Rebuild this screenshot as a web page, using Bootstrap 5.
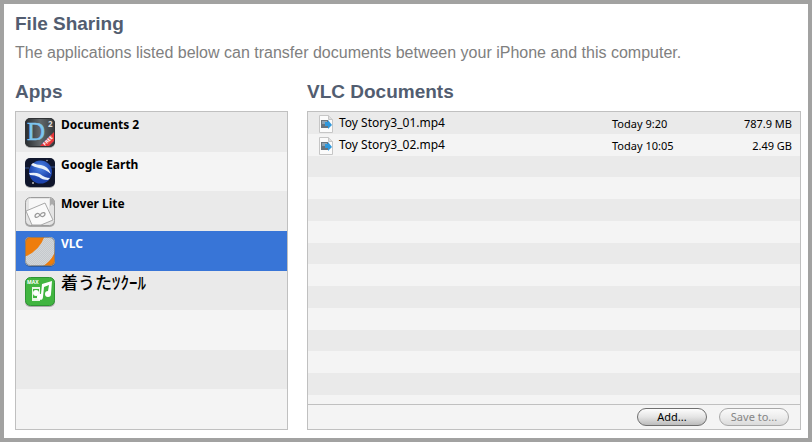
<!DOCTYPE html>
<html lang="en">
<head>
<meta charset="utf-8">
<meta name="viewport" content="width=device-width, initial-scale=1">
<title>File Sharing</title>
<link rel="stylesheet" href="https://cdn.jsdelivr.net/npm/bootstrap@5.3.0/dist/css/bootstrap.min.css">
<style>
body{font-family:"Liberation Sans",Arial,sans-serif;border:4px solid #a2a2a1;background:#fff;padding:8px 7px 8px 11px}
h1,h2{font-size:19px;line-height:24px;font-weight:700;color:#525d70;margin:0}
.intro{font-size:16px;line-height:24px;color:#808080;margin:5px 0 15px}
.sharing{display:grid;grid-template-columns:minmax(0,273fr) minmax(0,494fr);column-gap:19px}
.sharing h2{margin-bottom:7px}
.panel{border:1px solid #c0c0c0;background:#f4f4f4;font-family:"Noto Sans","Noto Sans CJK JP",sans-serif;color:#000}
.app-list{grid-template-rows:repeat(8,minmax(0,1fr))}
.app-row{border:0;background:none;padding:0 8px;font-size:12px;line-height:16px;font-weight:700;text-align:left;color:#000;min-height:0}
.app-row:nth-child(odd),.stripe:nth-child(odd){background:#eaeaea}
.app-row.chosen{background:#3875d7;color:#fff}
.app-row span{margin-top:5px;margin-left:5px}
.app-row .jp{font-family:"Noto Sans CJK JP",sans-serif;font-size:17px;margin-top:3px;font-weight:500}
.app-row svg{width:32px;height:34px;margin-top:4px;flex:none}
.file-table{padding-bottom:9px}
.files{width:100%;height:283px;table-layout:fixed;border-collapse:collapse}
.files td{padding:2px 0 0;height:21px;font-size:11px;line-height:16px;vertical-align:middle}
.files .title{font-size:12px;padding-left:10px}
.files svg{width:16px;height:18px;margin-right:5px;vertical-align:middle}
.files .size{text-align:right;padding-right:8px}
.date-col{width:112px}.size-col{width:76px}
.actions{border-top:1px solid #c0c0c0;padding:3px 11px;gap:12px}
.pill{width:70px;height:18px;border:1px solid #6f6f6f;border-radius:9px;background:linear-gradient(#fdfdfd,#e4e4e4 50%,#bcbcbc);font-size:11px;line-height:16px;padding:0;color:#000}
.pill:disabled{border-color:#a8a8a8;background:linear-gradient(#fafafa,#ededed 50%,#dadada);color:#858585}
</style>
</head>
<body class="min-vh-100">
<main>
<h1>File Sharing</h1>
<p class="intro">The applications listed below can transfer documents between your iPhone and this computer.</p>
<div class="sharing">
<section class="d-flex flex-column">
<h2>Apps</h2>
<div class="panel app-list d-grid flex-grow-1">
<button class="app-row d-flex align-items-start" type="button">
<svg viewBox="0 0 32 34" aria-hidden="true"><defs><linearGradient id="g1"><stop stop-color="#23272a"/><stop offset=".5" stop-color="#62676a"/><stop offset="1" stop-color="#34383b"/></linearGradient><clipPath id="c"><rect x="1" y="2" width="30" height="29" rx="5"/></clipPath></defs><rect x="1" y="3" width="30" height="29" rx="5" fill="#aaa"/><g clip-path="url(#c)"><rect width="32" height="34" fill="url(#g1)"/><path d="M15 31 31 15v9l-7 7z" fill="#e8353b"/></g><text x="3" y="24" font-family="Liberation Serif" font-weight="400" font-size="25" fill="#7dc4ee" stroke="#7dc4ee" stroke-width=".5">D</text><text x="24" y="11" font-size="8" fill="#ddd">2</text><text x="21" y="30" font-size="5" fill="#fff" transform="rotate(-45 21 30)">FREE</text><rect x="1.500" y="2.500" width="29" height="28" rx="5" fill="none" stroke="#303235"/></svg>
<span>Documents 2</span></button>
<button class="app-row d-flex align-items-start" type="button">
<svg viewBox="0 0 32 34" aria-hidden="true"><defs><radialGradient id="g2" cx=".5" cy=".3"><stop stop-color="#4e86e8"/><stop offset="1" stop-color="#1c43ac"/></radialGradient></defs><rect x="1" y="3" width="30" height="29" rx="5" fill="#aaa"/><rect x="1" y="2" width="30" height="29" rx="5" fill="#10162c"/><circle cx="16.500" cy="16" r="11.500" fill="url(#g2)"/><path d="M9 7q4 2 8 2 7 1 10 9-6-5-12-6-5-1-8-3zM5 17q7-1 11 1 5 4 10 4l-2 2q-6 0-9-3-4-2-9-2z" fill="#e9f0fa"/><path d="M1 12h4M26 11h5" stroke="#33508d"/><circle cx="9" cy="27" r="1" fill="#bbb"/><circle cx="23" cy="4.500" r=".7" fill="#ccc"/></svg>
<span>Google Earth</span></button>
<button class="app-row d-flex align-items-start" type="button">
<svg viewBox="0 0 32 34" aria-hidden="true"><rect x="1" y="3" width="30" height="29" rx="5" fill="#aaa"/><rect x="1.500" y="2.500" width="29" height="28" rx="5" fill="#e4e4e4" stroke="#9c9c9c"/><path d="M5 4h20v12H5z" fill="#f7f7f7"/><path d="M26 3v8l2-2 2 2V4z" fill="#aaa"/><path d="M2 16 21 8l8 17-12 5H8z" fill="#fafafa" stroke="#a8a8a8"/><path d="M16 20c-2-3-5-1-5 1s3 2 5-1 5-3 5-1-3 4-5 1z" fill="none" stroke="#9a9a9a" stroke-width="1.300"/></svg>
<span>Mover Lite</span></button>
<button class="app-row chosen d-flex align-items-start" type="button" aria-pressed="true">
<svg viewBox="0 0 32 34" aria-hidden="true"><defs><pattern id="dots" width="2" height="2" patternUnits="userSpaceOnUse"><path d="M0 0h1v1H0zM1 1h1v1H1z" fill="#9aa4ab" opacity=".25"/></pattern></defs><rect x="1" y="3" width="30" height="29" rx="5" fill="#315c9b"/><g clip-path="url(#c)"><path d="M0 0h32v34H0z" fill="#d3d6d8"/><path d="M0 0h32v34H0z" fill="url(#dots)"/><path d="M0 0h21Q16 16 0 22zM32 13v19H17q12-6 15-19z" fill="#ee7d0c"/></g><rect x="1.500" y="2.500" width="29" height="28" rx="5" fill="none" stroke="#777" stroke-opacity=".7"/></svg>
<span>VLC</span></button>
<button class="app-row d-flex align-items-start" type="button">
<svg viewBox="0 0 32 34" aria-hidden="true"><rect x="1" y="3" width="30" height="29" rx="5" fill="#aaa"/><rect x="1.500" y="2.500" width="29" height="28" rx="5" fill="#41b540" stroke="#2e9434"/><text x="3" y="9" font-size="5" fill="#fff">MAX</text><path d="M8 12h8v14H8z" fill="#e9f7e6"/><path d="M9 14h6v9H9z" fill="#41b540"/><circle cx="12" cy="18" r="3" fill="#fff"/><path d="M18 9 28 6l-1 13a3 3 0 1 1-3-3l1-6-5 2-1 10a3 3 0 1 1-2-3z" fill="#fff"/></svg>
<span class="jp" lang="ja">着うたﾂｸｰﾙ</span></button>
<div class="app-row"></div><div class="app-row"></div><div class="app-row"></div>
</div>
</section>
<section>
<h2>VLC Documents</h2>
<div class="panel">
<div class="file-table">
<table class="files" aria-label="VLC Documents">
<colgroup><col><col class="date-col"><col class="size-col"></colgroup>
<tbody>
<tr class="stripe"><td class="title"><svg viewBox="0 0 16 18" aria-hidden="true"><path d="M1.500 .5h9l4 4v13h-13z" fill="#fbfbfb" stroke="#c6c6c6"/><path d="M10.500 .5v4h4" fill="#ddd" stroke="#c6c6c6"/><path d="M3 5h7v8H3z" fill="#68737c"/><path d="M4 6h5v3H4z" fill="#8fa3b2"/><path d="M7 7h3V5l4 5-4 4v-3H7z" fill="#2f98dc"/></svg>Toy Story3_01.mp4</td><td>Today 9:20</td><td class="size">787.9 MB</td></tr>
<tr class="stripe"><td class="title"><svg viewBox="0 0 16 18" aria-hidden="true"><path d="M1.500 .5h9l4 4v13h-13z" fill="#fbfbfb" stroke="#c6c6c6"/><path d="M10.500 .5v4h4" fill="#ddd" stroke="#c6c6c6"/><path d="M3 5h7v8H3z" fill="#68737c"/><path d="M4 6h5v3H4z" fill="#8fa3b2"/><path d="M7 7h3V5l4 5-4 4v-3H7z" fill="#2f98dc"/></svg>Toy Story3_02.mp4</td><td>Today 10:05</td><td class="size">2.49 GB</td></tr>
<tr class="stripe"><td colspan="3"></td></tr><tr class="stripe"><td colspan="3"></td></tr><tr class="stripe"><td colspan="3"></td></tr><tr class="stripe"><td colspan="3"></td></tr><tr class="stripe"><td colspan="3"></td></tr><tr class="stripe"><td colspan="3"></td></tr><tr class="stripe"><td colspan="3"></td></tr><tr class="stripe"><td colspan="3"></td></tr><tr class="stripe"><td colspan="3"></td></tr><tr class="stripe"><td colspan="3"></td></tr><tr class="stripe"><td colspan="3"></td></tr>
</tbody></table>
</div>
<div class="actions d-flex justify-content-end">
<button class="pill" type="button">Add...</button>
<button class="pill" type="button" disabled>Save to...</button>
</div>
</div>
</section>
</div>
</main>
<script src="https://cdn.jsdelivr.net/npm/bootstrap@5.3.0/dist/js/bootstrap.bundle.min.js"></script>
</body>
</html>
